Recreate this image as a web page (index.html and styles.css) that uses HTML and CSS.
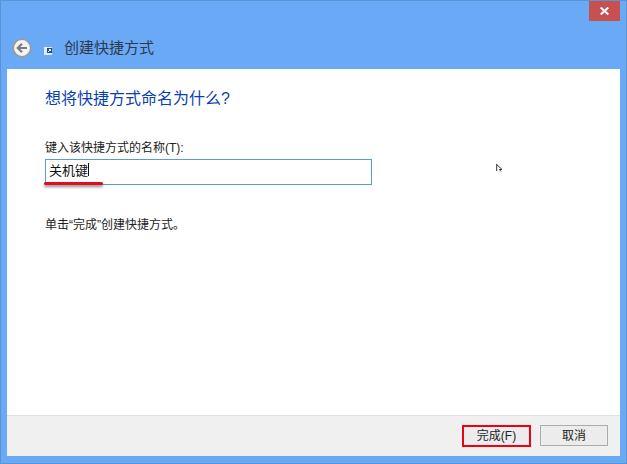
FILE: index.html
```html
<!DOCTYPE html>
<html lang="zh-CN">
<head>
  <meta charset="UTF-8">
  <title>创建快捷方式</title>
  <link rel="stylesheet" href="styles.css">
</head>
<body>
  <div class="window">
    <div class="titlebar">
      <button class="close">
        <svg width="9" height="8" viewBox="0 0 9 8"><path d="M0.7 0.5 L8.3 7.5 M8.3 0.5 L0.7 7.5" stroke="#fff" stroke-width="2" fill="none"/></svg>
      </button>
    </div>

    <div class="nav">
      <span class="back">
        <svg width="20" height="20" viewBox="0 0 20 20">
          <circle cx="10" cy="10" r="8.7" fill="#f4f4f4" stroke="#9a9a9a" stroke-width="1.5"/>
          <path d="M15 10 H6.5 M10 5.8 L5.8 10 L10 14.2" stroke="#7d7d7d" stroke-width="2.2" fill="none"/>
        </svg>
      </span>
      <span class="shortcut-icon">
        <svg width="8" height="8" viewBox="0 0 8 8">
          <rect x="0" y="0" width="8" height="8" fill="#e6eaf0"/>
          <rect x="3" y="1" width="5" height="5" fill="#1c4f96"/>
          <path d="M4 5 L6.5 2.5 M5 2.5 H6.5 V4" stroke="#fff" stroke-width="1" fill="none"/>
        </svg>
      </span>
      <span class="nav-title">创建快捷方式</span>
    </div>

    <div class="panel">
      <div class="content">
        <h1>想将快捷方式命名为什么?</h1>
        <label class="field-label">键入该快捷方式的名称(T):</label>
        <div class="input">关机键<span class="caret"></span></div>
        <p class="hint">单击“完成”创建快捷方式。</p>

        <div class="underline"></div>
        <svg class="cursor" width="7" height="8" viewBox="0 0 7 8"><path d="M0.7 0 V7 M0.7 0.5 L6 5.5 H3.5 L5 7.5" stroke="#333" stroke-width="1" fill="none"/></svg>
      </div>
      <div class="footer">
        <button class="btn btn-marked">完成(F)</button>
        <button class="btn">取消</button>
      </div>
    </div>
  </div>
</body>
</html>
```

FILE: styles.css
```css
html, body {
  margin: 0;
  height: 100%;
  background: #6aa9f5;
  font-family: "Liberation Sans", "Noto Sans CJK SC", sans-serif;
}

.window {
  box-sizing: border-box;
  width: 627px;
  height: 464px;
  display: flex;
  flex-direction: column;
  background: #6aa9f5;
  border: 1px solid #5a93d3;
}

.titlebar {
  display: flex;
  justify-content: flex-end;
  height: 20px;
  padding-right: 6px;
}

.close {
  width: 31px;
  height: 20px;
  padding: 0;
  border: none;
  background: #c75050;
  display: flex;
  align-items: center;
  justify-content: center;
}

.nav {
  display: flex;
  align-items: center;
  height: 48px;
  padding-left: 11px;
  box-sizing: border-box;
  padding-top: 6px;
}

.back {
  display: flex;
  width: 20px;
  height: 20px;
}

.shortcut-icon {
  display: flex;
  margin-left: 12px;
  margin-top: 6px;
}

.nav-title {
  margin-left: 12px;
  padding-bottom: 3px;
  font-size: 15px;
  color: #2b3a4d;
}

.panel {
  flex: 1;
  display: flex;
  flex-direction: column;
  margin: 0 6px 7px 6px;
  background: #fff;
}

.content {
  flex: 1;
  position: relative;
  padding: 19px 38px 0;
}

h1 {
  margin: 0;
  font-size: 16px;
  line-height: 22px;
  font-weight: normal;
  color: #0a3fb0;
}

.field-label {
  display: block;
  margin-top: 30px;
  font-size: 12px;
  line-height: 16px;
  color: #222;
}

.input {
  box-sizing: border-box;
  width: 327px;
  height: 26px;
  margin-top: 3px;
  padding: 0 0 6px 3px;
  display: flex;
  align-items: center;
  border: 1px solid #5b9bd5;
  font-size: 13px;
  color: #111;
}

.caret {
  width: 1px;
  height: 13px;
  background: #111;
}

.hint {
  margin: 32px 0 0;
  font-size: 12px;
  line-height: 16px;
  color: #222;
}

/* red mark drawn over the screenshot */
.underline {
  position: absolute;
  left: 37px;
  top: 113px;
  width: 59px;
  height: 3px;
  border-radius: 2px;
  background: #e00d1a;
  box-shadow: 0 2px 3px rgba(60, 60, 60, .6);
}

.cursor {
  position: absolute;
  left: 489px;
  top: 95px;
}

.footer {
  box-sizing: border-box;
  height: 41px;
  display: flex;
  justify-content: flex-end;
  align-items: center;
  gap: 9px;
  padding: 0 12px 1px 0;
  background: #f0f0f0;
  border-top: 1px solid #dfdfdf;
}

.btn {
  box-sizing: border-box;
  width: 68px;
  height: 21px;
  padding: 0;
  border: 1px solid #acacac;
  background: #ececec;
  font-family: inherit;
  font-size: 12px;
  line-height: 1;
  color: #222;
}

.btn-marked {
  width: 69px;
  height: 22px;
  border: 2px solid #f00010;
}
```
